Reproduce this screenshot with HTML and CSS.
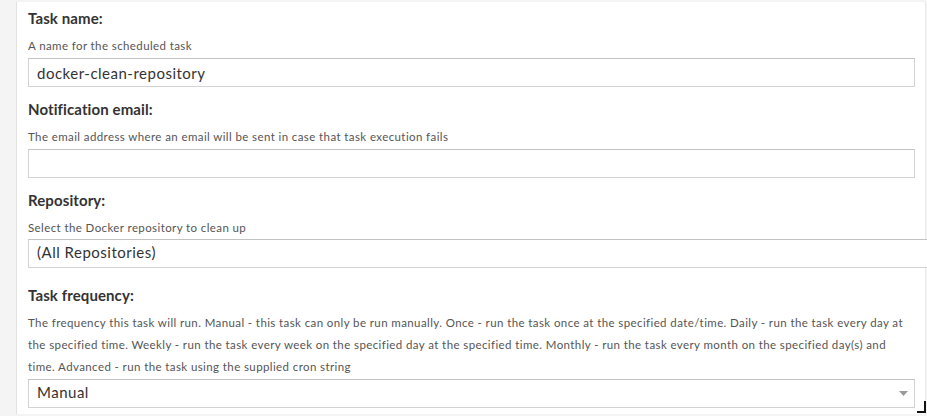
FILE: index.html
```
<!DOCTYPE html>
<html>
<head>
<meta charset="utf-8">
<link rel="stylesheet" href="styles.css">
</head>
<body>
<div class="panel">
  <div class="field">
    <div class="label">Task name:</div>
    <div class="help">A name for the scheduled task</div>
    <input class="input" type="text" value="docker-clean-repository">
  </div>
  <div class="field">
    <div class="label">Notification email:</div>
    <div class="help">The email address where an email will be sent in case that task execution fails</div>
    <input class="input" type="text" value="">
  </div>
  <div class="field field-select">
    <div class="label">Repository:</div>
    <div class="help">Select the Docker repository to clean up</div>
    <div class="select select-wide">(All Repositories)</div>
  </div>
  <div class="field">
    <div class="label">Task frequency:</div>
    <div class="help">The frequency this task will run. Manual - this task can only be run manually. Once - run the task once at the specified date/time. Daily - run the task every day at the specified time. Weekly - run the task every week on the specified day at the specified time. Monthly - run the task every month on the specified day(s) and time. Advanced - run the task using the supplied cron string</div>
    <div class="select">
      <span class="select-text">Manual</span>
      <svg class="arrow" width="9" height="5" viewBox="0 0 9 5"><path d="M0 0H9L4.5 5Z" fill="#9a9a9a"/></svg>
    </div>
  </div>
  <div class="corner"></div>
</div>
</body>
</html>
```
FILE: styles.css
```
html, body {
  margin: 0;
  padding: 0;
}
body {
  background: #f4f4f4;
  font-family: Lato, "Open Sans", sans-serif;
  color: #333;
  width: 927px;
  height: 416px;
  overflow: hidden;
}
.panel {
  position: relative;
  margin: 2px 1px 0 16px;
  background: #fff;
  border-left: 1px solid #e2e2e2;
  border-right: 1px solid #ebebeb;
  padding: 6px 10px 0 11px;
  height: 412px;
  box-sizing: border-box;
}
.field {
  margin-bottom: 12px;
}
.field-select {
  margin-bottom: 17px;
}
.label {
  font-size: 15px;
  font-weight: bold;
  line-height: 20px;
  color: #333;
  letter-spacing: 0.1px;
  margin-bottom: 7px;
}
.help {
  font-size: 11.5px;
  letter-spacing: 0.4px;
  line-height: 22px;
  color: #555;
  margin-bottom: 1px;
}
.input, .select {
  display: flex;
  align-items: center;
  box-sizing: border-box;
  width: 100%;
  height: 29px;
  margin: 0;
  padding: 0 8px;
  border: 1px solid #d3d3d3;
  border-top-color: #c2c2c2;
  background: #fff;
  font-family: Lato, "Open Sans", sans-serif;
  font-size: 15px;
  letter-spacing: 0.5px;
  color: #333;
  outline: none;
}
.select {
  justify-content: space-between;
  padding: 0 6px 3px 8px;
}
.select-wide {
  width: calc(100% + 12px);
  border-right: none;
  margin-top: -1px;
}
.arrow {
  margin-top: 2px;
}
.corner {
  position: absolute;
  right: -1px;
  bottom: 1px;
  width: 7px;
  height: 10px;
  border-right: 2px solid #111;
  border-bottom: 2px solid #111;
}
```
